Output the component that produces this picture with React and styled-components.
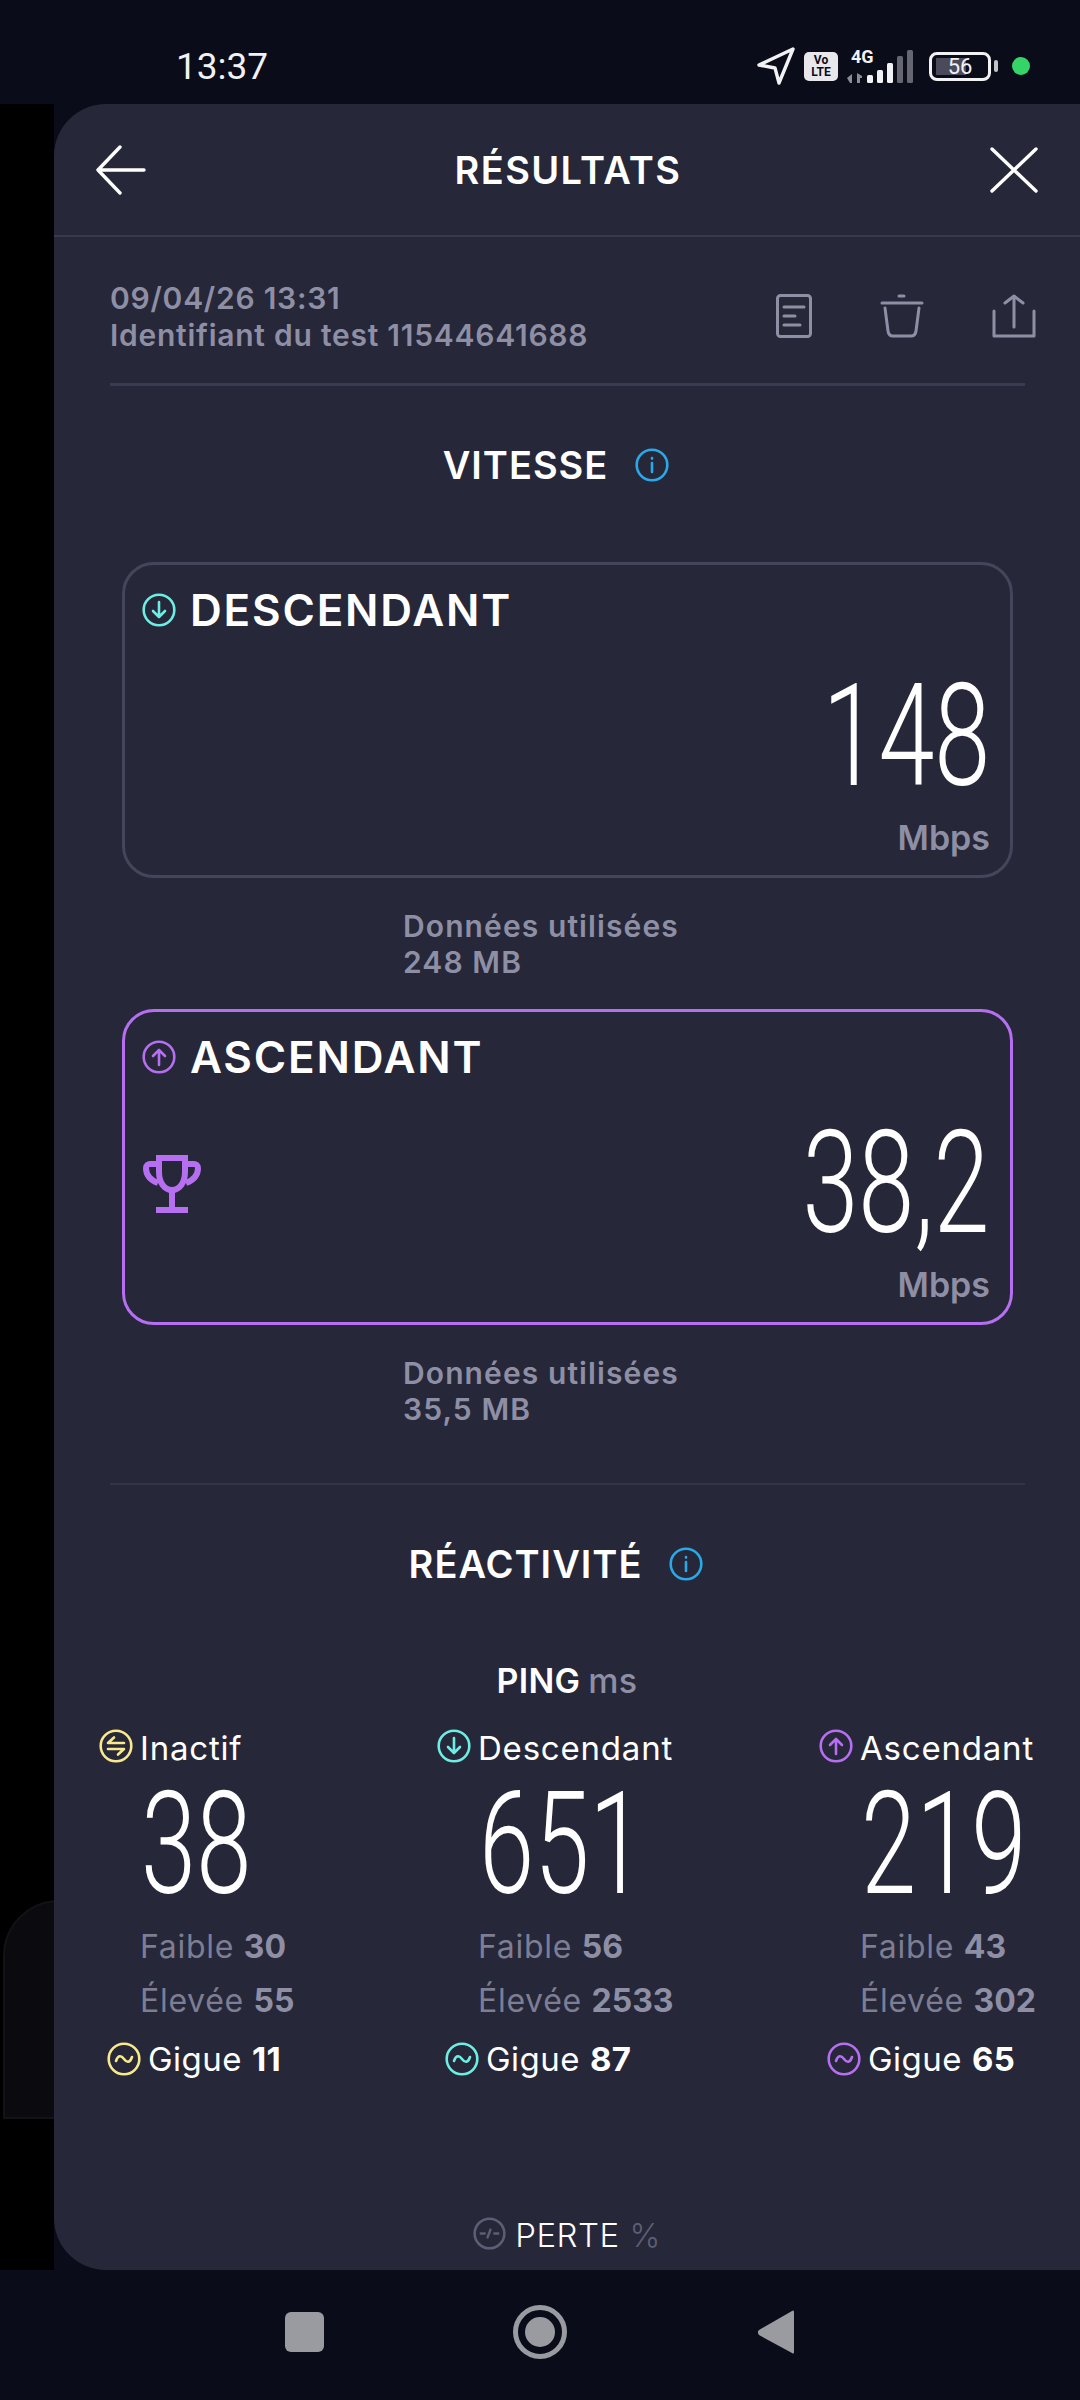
import React from 'react';
import styled, { createGlobalStyle } from 'styled-components';

const GREY = '#8e8fa5';
const CYAN = '#6ceee4';
const PURPLE = '#b66ff0';
const YELLOW = '#f8e98c';
const BLUE = '#29a9e8';

const GlobalStyle = createGlobalStyle`
  html, body {
    margin: 0;
    padding: 0;
    background: #0a0c1a;
  }
  * {
    box-sizing: border-box;
  }
`;

const Screen = styled.div`
  width: 1080px;
  height: 2400px;
  display: flex;
  flex-direction: column;
  background: #0a0c1a;
  font-family: Inter, "Liberation Sans", sans-serif;
  overflow: hidden;
`;

const StatusBar = styled.div`
  height: 104px;
  flex-shrink: 0;
  display: flex;
  align-items: center;
  justify-content: space-between;
  padding: 28px 50px 0 176px;
`;

const Clock = styled.span`
  font-family: Roboto, sans-serif;
  font-size: 37px;
  font-weight: 400;
  color: #f2f2f4;
`;

const StatusIcons = styled.div`
  display: flex;
  align-items: center;
`;

const Middle = styled.div`
  flex: 1;
  display: flex;
  min-height: 0;
`;

const LeftStrip = styled.div`
  width: 54px;
  background: #000;
  position: relative;
  overflow: hidden;

  &::after {
    content: '';
    position: absolute;
    left: 3px;
    top: 1796px;
    width: 120px;
    height: 215px;
    border-radius: 56px 0 0 0;
    background: #0a0a0f;
    border: 2px solid #121217;
  }
`;

const Panel = styled.div`
  flex: 1;
  background: #262739;
  border-radius: 52px 0 0 52px;
  display: flex;
  flex-direction: column;
`;

const PanelHeader = styled.div`
  height: 133px;
  flex-shrink: 0;
  display: flex;
  align-items: center;
  justify-content: space-between;
  padding: 0 42px;
  border-bottom: 2px solid #383a4e;
`;

const PanelTitle = styled.h1`
  margin: 0;
  font-size: 38px;
  font-weight: 600;
  letter-spacing: 1.4px;
  color: #fff;
`;

const MetaRow = styled.div`
  margin: 45px 55px 0 56px;
  height: 104px;
  display: flex;
  justify-content: space-between;
  border-bottom: 3px solid #3a3b50;
`;

const MetaText = styled.div`
  font-size: 30px;
  line-height: 37px;
  font-weight: 600;
  color: ${GREY};
  margin-top: -2px;
  letter-spacing: 0.75px;
`;

const MetaActions = styled.div`
  display: flex;
  gap: 68px;
  margin: 12px -11px 0 0;
  height: 44px;
`;

const SectionTitle = styled.div`
  display: flex;
  align-items: center;
  justify-content: center;
  gap: 27px;
  font-size: 38px;
  font-weight: 600;
  letter-spacing: 1px;
  color: #fff;
  height: 50px;
  padding-right: 22px;
  margin: ${(p) => p.$margin};
`;

const Card = styled.div`
  margin: 0 67px 0 68px;
  height: 316px;
  border: 3px solid ${(p) => p.$border};
  border-radius: 32px;
  padding: 21px 20px 0 17px;
  display: flex;
  flex-direction: column;
`;

const CardLabel = styled.div`
  display: flex;
  align-items: center;
  gap: 14px;
  font-size: 44px;
  font-weight: 600;
  line-height: 48px;
  color: #fff;
  letter-spacing: 1.8px;
`;

const CardBody = styled.div`
  display: flex;
  align-items: center;
  justify-content: space-between;
  height: 146px;
  margin-top: 30px;
  padding-left: 1px;
`;

const SpeedValue = styled.div`
  margin-left: auto;
  font-family: Roboto, sans-serif;
  font-weight: 300;
  font-size: 142px;
  line-height: 146px;
  color: #fff;
  transform: scaleX(0.71);
  transform-origin: right center;
`;

const Unit = styled.div`
  text-align: right;
  font-size: 34px;
  font-weight: 600;
  line-height: 38px;
  color: ${GREY};
  margin-top: 9px;
`;

const DataUsed = styled.div`
  font-size: 30px;
  line-height: 36px;
  font-weight: 600;
  letter-spacing: 1.1px;
  color: ${GREY};
  margin: 30px 0 29px 349px;
`;

const ThinDivider = styled.div`
  height: 2px;
  background: #323347;
  margin: 27px 55px 0 56px;
`;

const PingTitle = styled.div`
  text-align: center;
  font-size: 34px;
  font-weight: 600;
  line-height: 40px;
  letter-spacing: 0.3px;
  color: #fff;
  margin: 72px 0 0 0;

  span {
    color: ${GREY};
    font-weight: 500;
    margin-left: 8px;
  }
`;

const PingGrid = styled.div`
  display: grid;
  grid-template-columns: 195px 239px 217px;
  justify-content: space-between;
  padding: 0 44px 0 45px;
  margin-top: 28px;
`;

const PingColumn = styled.div`
  display: flex;
  flex-direction: column;
`;

const PingHead = styled.div`
  display: flex;
  align-items: center;
  gap: 7px;
  height: 38px;
  font-size: 33px;
  font-weight: 400;
  letter-spacing: 0.8px;
  color: #fff;
  white-space: nowrap;

  svg {
    margin-top: -4px;
  }
`;

const PingValue = styled.div`
  font-family: Roboto, sans-serif;
  font-weight: 300;
  font-size: 142px;
  line-height: 120px;
  color: #fff;
  padding-left: 60px;
  margin-top: 18px;
  transform: scaleX(0.7);
  transform-origin: left center;
`;

const Stat = styled.div`
  padding-left: 41px;
  font-size: 32px;
  line-height: 54px;
  font-weight: 400;
  letter-spacing: 0.7px;
  color: #7d7e94;
  white-space: nowrap;

  b {
    font-weight: 700;
    letter-spacing: 0;
    color: ${GREY};
  }
`;

const StatGroup = styled.div`
  margin-top: 15px;
`;

const Jitter = styled.div`
  display: flex;
  align-items: center;
  gap: 7px;
  padding-left: 8px;
  margin-top: 6px;
  height: 50px;
  font-size: 33px;
  letter-spacing: 0.5px;
  color: #fff;
  white-space: nowrap;

  b {
    font-weight: 700;
  }
`;

const LossRow = styled.div`
  display: flex;
  align-items: center;
  justify-content: center;
  gap: 9px;
  font-size: 33px;
  font-weight: 300;
  letter-spacing: 0.5px;
  color: #fff;
  margin-top: 131px;

  svg {
    margin-top: -4px;
  }

  span {
    color: #5c5e73;
  }
`;

const NavBar = styled.div`
  height: 130px;
  flex-shrink: 0;
  display: flex;
  align-items: center;
  justify-content: center;
  padding-bottom: 6px;
`;

const NavSquare = styled.div`
  width: 39px;
  height: 40px;
  border-radius: 6px;
  background: #9a9ba0;
  margin-right: 189px;
`;

const NavCircle = styled.div`
  width: 54px;
  height: 54px;
  border-radius: 50%;
  border: 5px solid #9a9ba0;
  display: flex;
  align-items: center;
  justify-content: center;
  margin-right: 190px;

  &::after {
    content: '';
    width: 30px;
    height: 30px;
    border-radius: 50%;
    background: #9a9ba0;
  }
`;

function RingIcon({ color, children, size = 34 }) {
  return (
    <svg width={size} height={size} viewBox="0 0 34 34" fill="none" stroke={color} strokeWidth="2.6" strokeLinecap="round" strokeLinejoin="round" style={{ flexShrink: 0 }}>
      <circle cx="17" cy="17" r="15.3" />
      {children}
    </svg>
  );
}

const DownIcon = () => (
  <RingIcon color={CYAN}>
    <path d="M17 9v15M11 18l6 6 6-6" />
  </RingIcon>
);

const UpIcon = () => (
  <RingIcon color={PURPLE}>
    <path d="M17 25V10M11 16l6-6 6 6" />
  </RingIcon>
);

const IdleIcon = () => (
  <RingIcon color={YELLOW}>
    <path d="M25 14H9l6-5.500M9 20h16l-6 5.500" />
  </RingIcon>
);

const WaveIcon = ({ color }) => (
  <RingIcon color={color}>
    <path d="M9 19c2-6 5-6 8-2s6 4 8-2" />
  </RingIcon>
);

const InfoIcon = () => (
  <RingIcon color={BLUE}>
    <path d="M17 15v9M17 10v.6" />
  </RingIcon>
);

const LossIcon = () => (
  <RingIcon color="#5c5e73" size={33}>
    <path d="M8 17h4M15 21l3-8M22 17h4" />
  </RingIcon>
);

const BackIcon = () => (
  <svg width="50" height="50" viewBox="0 0 50 50" fill="none" stroke="#fff" strokeWidth="3.4" strokeLinecap="round" strokeLinejoin="round">
    <path d="M24 2 2 25l22 23M2 25h46" />
  </svg>
);

const CloseIcon = () => (
  <svg width="48" height="46" viewBox="0 0 48 46" fill="none" stroke="#fff" strokeWidth="3.4" strokeLinecap="round">
    <path d="M2 2l44 42M46 2 2 44" />
  </svg>
);

const DocIcon = () => (
  <svg width="36" height="44" viewBox="0 0 36 44" fill="none" stroke={GREY} strokeWidth="3" strokeLinecap="round" strokeLinejoin="round">
    <rect x="1.500" y="1.500" width="33" height="41" rx="3" />
    <path d="M8 13h20M8 22h11M8 31h16" />
  </svg>
);

const TrashIcon = () => (
  <svg width="44" height="44" viewBox="0 0 44 44" fill="none" stroke={GREY} strokeWidth="3" strokeLinecap="round" strokeLinejoin="round">
    <path d="M19 2h5M2 9h40M5 14l3 23c.4 3 2 5 5 5h18c3 0 4.600-2 5-5l3-23" />
  </svg>
);

const ShareIcon = () => (
  <svg width="44" height="44" viewBox="0 0 44 44" fill="none" stroke={GREY} strokeWidth="3" strokeLinecap="round" strokeLinejoin="round">
    <path d="M22 33V2M13 9l9-7 9 7M2 17v25h40V17" />
  </svg>
);

const TrophyIcon = () => (
  <svg width="58" height="58" viewBox="0 0 58 58" fill="none" stroke={PURPLE} strokeWidth="6" style={{ flexShrink: 0 }}>
    <path d="M16 3h26v14c0 10-5 18-13 18S16 27 16 17z" />
    <path d="M16 9H7c-2 0-4 1.500-4 4 0 7 4 12 12 15M42 9h9c2 0 4 1.500 4 4 0 7-4 12-12 15" />
    <path d="M29 35v18" />
    <path d="M13 55h32" />
  </svg>
);

const LocationIcon = () => (
  <svg width="38" height="38" viewBox="0 0 38 38" fill="none" stroke="#f2f2f4" strokeWidth="3.4" strokeLinejoin="round">
    <path d="M36 2 2 18l16 3 4 15z" />
  </svg>
);

const SignalIcons = () => (
  <svg width="68" height="38" viewBox="0 -4 68 38" style={{ marginLeft: 9, marginTop: -4 }}>
    <text x="4" y="14" fontFamily="Roboto, sans-serif" fontSize="18" fontWeight="700" fill="#f2f2f4">4G</text>
    <path d="M0 29l5-4v9H3zM10 24l5 3v2h-2v5h-3z" fill="#8a8b93" />
    <rect x="20" y="26" width="6" height="8" rx="1.500" fill="#f2f2f4" />
    <rect x="30" y="21" width="6" height="13" rx="1.500" fill="#f2f2f4" />
    <rect x="40" y="14" width="6" height="20" rx="1.500" fill="#f2f2f4" />
    <rect x="50" y="7" width="6" height="27" rx="1.500" fill="#65666f" />
    <rect x="60" y="1" width="6" height="33" rx="1.500" fill="#65666f" />
  </svg>
);

const VoLte = styled.div`
  width: 34px;
  height: 29px;
  border-radius: 5px;
  background: #e8e8ec;
  color: #0a0c1a;
  font-family: Roboto, sans-serif;
  font-size: 12px;
  line-height: 12px;
  font-weight: 700;
  text-align: center;
  padding-top: 2px;
  margin-left: 9px;
`;

const Battery = styled.div`
  position: relative;
  width: 62px;
  height: 29px;
  margin-left: 14px;
  border: 3px solid #f2f2f4;
  border-radius: 8px;
  display: flex;
  align-items: center;
  justify-content: center;
  font-family: Roboto, sans-serif;
  font-size: 22px;
  color: #f2f2f4;
  background: linear-gradient(90deg, #4a4b5a 0 30px, transparent 30px) 4px 3px / 100% 17px no-repeat;

  &::after {
    content: '';
    position: absolute;
    right: -10px;
    top: 5px;
    width: 4px;
    height: 12px;
    border-radius: 2px;
    background: #c4c4c8;
  }
`;

const GreenDot = styled.div`
  width: 18px;
  height: 18px;
  border-radius: 50%;
  background: #35d468;
  margin-left: 21px;
`;

const NavBack = () => (
  <svg width="38" height="46" viewBox="0 0 38 46">
    <path d="M35 2c1-1 2-.5 2 1v40c0 1.500-1 2-2 1L2 26c-1.500-1.500-1.500-4 0-5z" fill="#9a9ba0" />
  </svg>
);

function Speed({ label, icon, value, color, trophy }) {
  return (
    <Card $border={color}>
      <CardLabel>
        {icon}
        {label}
      </CardLabel>
      <CardBody>
        {trophy && <TrophyIcon />}
        <SpeedValue>{value}</SpeedValue>
      </CardBody>
      <Unit>Mbps</Unit>
    </Card>
  );
}

const pings = [
  { label: 'Inactif', icon: <IdleIcon />, color: YELLOW, value: '38', low: 30, high: 55, jitter: 11 },
  { label: 'Descendant', icon: <DownIcon />, color: CYAN, value: '651', low: 56, high: 2533, jitter: 87 },
  { label: 'Ascendant', icon: <UpIcon />, color: PURPLE, value: '219', low: 43, high: 302, jitter: 65 },
];

export default function App() {
  return (
    <Screen>
      <GlobalStyle />
      <StatusBar>
        <Clock>13:37</Clock>
        <StatusIcons>
          <LocationIcon />
          <VoLte>Vo<br />LTE</VoLte>
          <SignalIcons />
          <Battery>56</Battery>
          <GreenDot />
        </StatusIcons>
      </StatusBar>
      <Middle>
        <LeftStrip />
        <Panel>
          <PanelHeader>
            <BackIcon />
            <PanelTitle>RÉSULTATS</PanelTitle>
            <CloseIcon />
          </PanelHeader>
          <MetaRow>
            <MetaText>
              09/04/26 13:31
              <br />
              Identifiant du test 11544641688
            </MetaText>
            <MetaActions>
              <DocIcon />
              <TrashIcon />
              <ShareIcon />
            </MetaActions>
          </MetaRow>
          <SectionTitle $margin="54px 0 72px 0">
            VITESSE
            <InfoIcon />
          </SectionTitle>
          <Speed label="DESCENDANT" icon={<DownIcon />} value="148" color="#44465c" />
          <DataUsed>
            Données utilisées
            <br />
            248 MB
          </DataUsed>
          <Speed label="ASCENDANT" icon={<UpIcon />} value="38,2" color={PURPLE} trophy />
          <DataUsed>
            Données utilisées
            <br />
            35,5 MB
          </DataUsed>
          <ThinDivider />
          <SectionTitle $margin="54px 0 0 0">
            RÉACTIVITÉ
            <InfoIcon />
          </SectionTitle>
          <PingTitle>
            PING<span>ms</span>
          </PingTitle>
          <PingGrid>
            {pings.map((p) => (
              <PingColumn key={p.label}>
                <PingHead>
                  {p.icon}
                  {p.label}
                </PingHead>
                <PingValue>{p.value}</PingValue>
                <StatGroup>
                  <Stat>Faible <b>{p.low}</b></Stat>
                  <Stat>Élevée <b>{p.high}</b></Stat>
                </StatGroup>
                <Jitter>
                  <WaveIcon color={p.color} />
                  <span>Gigue <b>{p.jitter}</b></span>
                </Jitter>
              </PingColumn>
            ))}
          </PingGrid>
          <LossRow>
            <LossIcon />
            <div>PERTE <span>%</span></div>
          </LossRow>
        </Panel>
      </Middle>
      <NavBar>
        <NavSquare />
        <NavCircle />
        <NavBack />
      </NavBar>
    </Screen>
  );
}
